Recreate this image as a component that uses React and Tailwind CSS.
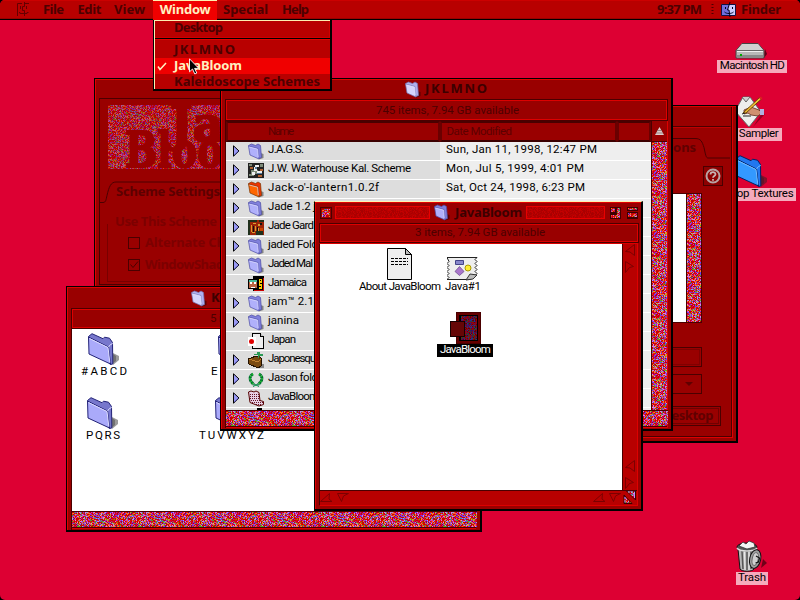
import React, { useLayoutEffect, useRef, useState } from "react";

const CHARCOAL = "font-['Noto_Sans','Open_Sans',sans-serif] font-bold text-[13px]";
const GENEVA = "font-['Roboto','Liberation_Sans',sans-serif] text-[11.5px]";

/* Text tracked out (or in) so that it fills a given width. */
function Fit({ w, className = "", children }) {
  const ref = useRef(null);
  const [space, setSpace] = useState(0);
  useLayoutEffect(() => {
    const natural = ref.current.getBoundingClientRect().width - space * children.length;
    setSpace((w - natural) / Math.max(1, children.length - 1));
  }, [w, children]);
  return (
    <span ref={ref} className={"inline-block shrink-0 whitespace-pre " + className} style={{ letterSpacing: space + "px" }}>
      {children}
    </span>
  );
}

/* Pixel confetti texture, one path per colour. */
function confetti(colors, size, start) {
  let seed = start;
  const paths = colors.map(() => "");
  for (let y = 0; y < size; y++)
    for (let x = 0; x < size; x++) {
      seed = (seed * 48271) % 2147483647;
      const i = Math.floor((seed / 2147483647) * colors.length);
      paths[i] += `M${x} ${y}h1v1h-1z`;
    }
  return paths.map((d, i) => <path key={i} d={d} fill={colors[i]} />);
}
const BRIGHT = ["#cc0000", "#dd0022", "#990033", "#cc0000", "#ee2200", "#cc0000", "#cc33cc", "#dd77ee", "#ff8822", "#5555ee", "#7733ee", "#55aa22", "#993399", "#dd0044", "#cc1100", "#99aacc", "#cc9933", "#ff5533"];
const DARK = ["#660000", "#771111", "#331166", "#223388", "#990000", "#225522", "#551155", "#880022"];

function Textures() {
  return (
    <svg className="absolute h-0 w-0" aria-hidden="true">
      <defs>
        <pattern id="bloom" width="61" height="61" patternUnits="userSpaceOnUse" shapeRendering="crispEdges">{confetti(BRIGHT, 61, 7717)}</pattern>
        <pattern id="dim" width="31" height="31" patternUnits="userSpaceOnUse" shapeRendering="crispEdges">{confetti(DARK, 31, 913)}</pattern>
        <pattern id="grain" width="31" height="31" patternUnits="userSpaceOnUse" shapeRendering="crispEdges">{confetti(["#b80000", "#b00000", "#a80000", "#c40000"], 31, 511)}</pattern>
      </defs>
    </svg>
  );
}
function Noise({ className, fill = "url(#bloom)" }) {
  return <svg className={"block shrink-0 " + className}><rect width="100%" height="100%" fill={fill} /></svg>;
}

function SmallFolder({ front = "#b0b0fb", back = "#8080dc", line = "#4a4aa4" }) {
  return (
    <svg className="block h-[17px] w-[17px] shrink-0" viewBox="0 0 17 17">
      <path d="M11 16.500l4.500-1.500v-4l-3-1z" fill="#000" opacity=".4" />
      <path d="M.5 2.500L3.500 1l4 1.500L10 1l2.500 1.500 1 12L11 15.500z" fill={back} stroke={line} strokeWidth=".7" />
      <path d="M.5 3l9.500 2.500 1 10.500-9-4z" fill={front} stroke={line} strokeWidth=".7" />
      <path d="M1.300 4l8.300 2.200.7 8" fill="none" stroke="#e0e0ff" strokeWidth=".7" />
    </svg>
  );
}
function BigFolder({ front = "#aaaafa", back = "#7777cc", line = "#222277", light = "#ddddff" }) {
  return (
    <svg className="block h-[33px] w-8" viewBox="0 0 32 33">
      <path d="M25 32l6-5v-4l-6-3z" fill="#222" opacity=".45" />
      <path d="M24 31l4-3v-5l-3-2z" fill="#222" opacity=".35" />
      <path d="M.5 3.500L4 .700l11 5 1.500-1.500 5 1L24.500 9.500l.3 21.500-2.500.5z" fill={back} stroke={line} />
      <path d="M.5 4L20.500 14l2 17L1 21z" fill={front} stroke={line} />
      <path d="M1.500 5.500l18.500 9 1.800 15" fill="none" stroke={light} />
      <path d="M20.500 14l2-2.500 2.300-1" fill="none" stroke={light} />
    </svg>
  );
}
function Triangle() {
  return (
    <svg className="block h-3 w-2 shrink-0" viewBox="0 0 8 12">
      <path d="M1.500.8v10.400L7 6z" fill="#9a9af5" stroke="#000" />
      <path d="M2.500 10l4-4" stroke="#5555bb" strokeWidth=".7" />
    </svg>
  );
}
function Pic({ children }) {
  return <svg className="block h-[17px] w-[17px] shrink-0" viewBox="0 0 17 17" shapeRendering="crispEdges">{children}</svg>;
}
const PICS = {
  folder: <SmallFolder />,
  orange: <SmallFolder front="#ff6600" back="#ee3300" line="#773300" />,
  water: (
    <Pic>
      <path d="M0 1h16v15H0z" fill="#222" />
      <path d="M1 2h3v2H1zM3 8h7v4H3zM12 2h3v3h-3zM1 12h5v2H1z" fill="#7c8a78" />
      <path d="M7 3h4v2H7zM6 5h3v4H6zM9 9h5v2H9zM4 10h3v3H4z" fill="#eee" />
      <path d="M12 7h3v2h-3zM2 5h3v2H2zM10 13h4v2h-4z" fill="#b06030" />
      <path d="M7 5h2v2H7zM9 11h5v1H9z" fill="#557799" />
    </Pic>
  ),
  garden: (
    <Pic>
      <path d="M0 1h16v15H0z" fill="#9c2408" />
      <path d="M0 1h9v2H0zM0 3h2v13H0zM8 12h7v4H8zM11 1h5v2h-5z" fill="#20301c" />
      <path d="M3 6h1v7H3zM5 4h3v1H5zM7 7h1v5H7zM10 5h2v2h-2zM4 13h3v1H4zM10 9h1v3h-1z" fill="#d8a030" />
      <path d="M5 7h1v6H5zM9 8h1v4H9zM12 4h2v2h-2z" fill="#111" />
      <path d="M12 9h3v3h-3z" fill="#cc4400" />
    </Pic>
  ),
  jamaica: (
    <Pic>
      <path d="M5 0h11v15H5zM0 3h10v10H0z" fill="#000" />
      <path d="M6 14h9V2h1v13H6z" fill="#cc0000" />
      <path d="M1 4h8v2H1z" fill="#44bb99" />
      <path d="M1 6h8v6H1z" fill="#bb6644" />
      <path d="M2 6h2v2H2zM6 6h2v2H6zM3 11h4v1H3z" fill="#fff" />
      <path d="M11 3h3v10h-3z" fill="#ffcc00" />
      <path d="M12 4h1v1h-1zM12 7h2v1h-2zM11 10h2v1h-2z" fill="#000" />
    </Pic>
  ),
  japan: (
    <Pic>
      <path d="M4.500.5h8l3 3v12h-11z" fill="#eee" stroke="#000" />
      <path d="M12.500.5v3h3" fill="#bbb" stroke="#000" />
      <path d="M0 4h8v9H0z" fill="#fff" />
      <circle cx="3.500" cy="8.500" r="2.500" fill="#e00000" shapeRendering="auto" />
    </Pic>
  ),
  japonesque: (
    <Pic>
      <path d="M13 12h3v4h-4z" fill="#888" />
      <path d="M.5 7L8 4l5 2v8l-3 2-9-4z" fill="#7a4a10" stroke="#221100" />
      <path d="M1 7l9 3 3-3" fill="none" stroke="#c08030" />
      <path d="M9 0h3v2h3v2h-4v2h-1V3H6V2h3z" fill="#2a9a55" />
      <path d="M11 4h1v3h-1z" fill="#663300" />
    </Pic>
  ),
  wreath: (
    <svg className="block h-[17px] w-[17px] shrink-0" viewBox="0 0 17 17">
      <path d="M5 3C1 5 1 10 6 13.500M11 3c4 2 4 7-1 10.500" fill="none" stroke="#063" strokeWidth="3" strokeDasharray="2.600 .5" />
      <path d="M5 3C1 5 1 10 6 13.500M11 3c4 2 4 7-1 10.500" fill="none" stroke="#11bb22" strokeWidth="1.600" strokeDasharray="1.600 1" />
      <path d="M5 15.500l5-2.500M11 15.500L6 13" stroke="#084" />
    </svg>
  ),
  bloom: (
    <svg className="block h-[17px] w-[17px] shrink-0" viewBox="0 0 17 17">
      <path d="M.5 2L3 1l3 1 2-1 3 1.500 1 8 3.500 1v3L11 16l-9-3.500z" fill="#e8d0e4" stroke="#550000" />
      <path d="M2 4.500h9M2 6.500h9M2 8.500h9M3 10.500h9M4 12.500h11M8 14.500h6" stroke="#550011" strokeWidth=".9" strokeDasharray="1 1" />
    </svg>
  ),
};

const ROWS = [
  ["folder", "J.A.G.S.", 36, "Sun, Jan 11, 1998, 12:47 PM", 151],
  ["water", "J.W. Waterhouse Kal. Scheme", 143, "Mon, Jul 5, 1999, 4:01 PM", 138],
  ["orange", "Jack-o'-lantern1.0.2f", 111, "Sat, Oct 24, 1998, 6:23 PM", 139],
  ["folder", "Jade 1.2 j", 48],
  ["garden", "Jade Gard", 46],
  ["folder", "jaded Fold", 50],
  ["folder", "Jaded Mal", 45],
  ["jamaica", "Jamaica", 39],
  ["folder", "jam™ 2.1", 46],
  ["folder", "janina", 31],
  ["japan", "Japan", 28],
  ["japonesque", "Japonesqu", 48],
  ["wreath", "Jason fold", 50],
  ["bloom", "JavaBloom", 51],
];

function InfoStrip({ children, className = "" }) {
  return (
    <div className={"flex shrink-0 items-center border border-[#4a0000] bg-[#990000] " + className}>
      <div className={"flex h-full w-full items-center border border-[#dd0000] text-[#4c0000] " + GENEVA}>{children}</div>
    </div>
  );
}

function Frame({ className, top = "border-t-[#e00000]", children }) {
  return (
    <section className={"absolute border-l border-r-2 border-b-2 border-t border-black " + className}>
      <div className={"flex h-full flex-col border-t border-l border-l-[#e00000] bg-[#990000] " + top}>{children}</div>
    </section>
  );
}

function SchemePanel() {
  return (
    <>
      <section className="absolute left-[300px] top-[105px] h-[338px] w-[438px] border border-r-2 border-b-2 border-black bg-[#990000]">
        <div className="flex h-full border-t border-t-[#dd0000] pb-[3px] pr-[3px]">
          <div className="flex flex-1 flex-col items-end border-b border-r border-[#dd0000]">
            <div className="flex w-full flex-1 flex-col items-end border-b border-r border-[#4a0000]">
              <svg className="block h-[52px] w-[358px]" viewBox="374 107 358 52" fill="none">
                <path d="M374 126.500h357.500" stroke="#4a0000" />
                <path d="M374 127.500h357.500" stroke="#c00000" />
                <path d="M374 138.500h322c6 0 7 3 9 9 1.500 7 2 10.500 4 10.500h22" stroke="#4a0000" />
              </svg>
              <span className={"-mt-[21px] mr-[35px] h-[21px] leading-[18px] text-[#600000] " + CHARCOAL}><Fit w={23}>ons</Fit></span>
              <div className="mr-2 mt-[7px] flex h-5 w-5 items-center justify-center border border-[#4a0000] bg-[#8c0000]">
                <svg className="h-4 w-4" viewBox="0 0 16 16" fill="none">
                  <circle cx="8" cy="8" r="6.500" stroke="#b8a4a4" strokeWidth="2" />
                  <path d="M5.500 6.500C5.500 3.500 10.500 3.500 10.500 6.200 10.500 8 8 8 8 9.700M8 11v1.800" stroke="#c8b4b4" strokeWidth="1.800" />
                </svg>
              </div>
              <div className="mr-[29px] mt-[7px] flex h-[130px] border border-[#4a0000]">
                <div className="w-[100px] bg-white" />
                <Noise className="h-full w-[15px] border-l border-[#4a0000]" />
              </div>
              <div className="mr-[29px] mt-6 h-5 w-[100px] border border-[#4a0000] p-px"><div className="h-full border border-[#800000]" /></div>
              <div className="mr-[29px] mt-[7px] flex h-5 w-[100px] items-center justify-end border border-[#4a0000] pr-[7px]">
                <svg className="h-1 w-[9px]"><path d="M0 0h8L4 4z" fill="#600000" /></svg>
              </div>
              <div className="mr-[10px] mt-3 flex h-5 w-[100px] border border-[#4a0000] p-px">
                <div className={"flex h-full w-full items-center justify-end border border-[#700000] pr-[5px] text-[#600000] " + CHARCOAL}><Fit w={51}>Desktop</Fit></div>
              </div>
            </div>
          </div>
        </div>
      </section>

      <Frame className="left-[94px] top-[78px] h-[360px] w-[400px]">
        <div className="ml-[3px] mt-[18px] flex h-[187px] flex-col border border-[#4a0000]">
          <div className="ml-[8px] mt-[6px] h-[64px] w-[200px] overflow-hidden">
            <div className="relative h-full">
              <Noise className="h-full w-full" />
              <div className="absolute inset-0 bg-[#990000]/40" />
              <div className="absolute left-[62px] top-[-11px] font-['DejaVu_Serif',serif] text-[48px] font-bold leading-[60px] text-[#990000] [-webkit-text-stroke:2px_#990000]">Java</div>
              <div className="absolute left-[17px] top-[15px] origin-left scale-x-[0.78] font-['DejaVu_Serif',serif] text-[49px] font-bold leading-[60px] text-[#990000] [-webkit-text-stroke:2px_#990000]">Bloom</div>
            </div>
          </div>
          <svg className="block h-[35px] w-[250px] shrink-0" viewBox="100 169 250 35" fill="none">
            <path d="M100 202.500h3c3 0 3-3 4-7 2-9 4-13.500 9-13.500h234" stroke="#4a0000" />
          </svg>
          <div className={"-mt-[22px] ml-[16px] h-[18px] leading-[18px] text-[#5c0000] " + CHARCOAL}><Fit w={104}>Scheme Settings</Fit></div>
          <div className={"ml-[15px] mt-[12px] h-[18px] leading-[18px] text-[#7c0000] " + CHARCOAL}><Fit w={102}>Use This Scheme</Fit></div>
          <div className={"-mt-[6px] ml-[7px] flex h-[58px] flex-col border-l border-b border-[#780000] pl-5 pt-[8px] text-[#7c0000] " + CHARCOAL}>
            <div className="flex h-[22px] items-center gap-[5px]">
              <svg className="h-3 w-3"><rect x=".5" y=".5" width="11" height="11" fill="none" stroke="#4a0000" /></svg>
              <Fit w={80}>Alternate Ch</Fit>
            </div>
            <div className="flex h-[22px] items-center gap-[5px]">
              <svg className="h-3 w-3" fill="none" stroke="#4a0000"><rect x=".5" y=".5" width="11" height="11" /><path d="M2.500 5.500l2.500 3 5-6" /></svg>
              <Fit w={79}>WindowShad</Fit>
            </div>
          </div>
        </div>
      </Frame>
    </>
  );
}

function CanvasIcon({ className, w, label, children }) {
  return (
    <div className={"absolute flex flex-col items-center " + className}>
      {children}
      <span className={"leading-[11px] text-black " + GENEVA}><Fit w={w}>{label}</Fit></span>
    </div>
  );
}

function SchemesWindow() {
  return (
    <Frame className="left-[66px] top-[286px] h-[246px] w-[416px]">
      <div className={"flex h-5 shrink-0 items-center pl-[123px] text-[#3c0000] " + CHARCOAL}>
        <SmallFolder front="#d4d4fc" back="#b0b0ee" line="#7070b0" />
        <span className="ml-[3px]"><Fit w={140}>Kaleidoscope Schemes</Fit></span>
      </div>
      <InfoStrip className="mx-[3px] h-[21px] pl-0"><span className="ml-[137px]"><Fit w={125}>5 items, 7.94 GB available</Fit></span></InfoStrip>
      <div className="ml-[3px] mr-1 flex flex-1 flex-col border-l border-[#4a0000]">
        <div className="relative h-[182px] w-[405px] overflow-hidden bg-white">
          <CanvasIcon className="left-[9px] top-[4px]" w={46} label="# A B C D"><BigFolder /></CanvasIcon>
          <CanvasIcon className="left-[139px] top-[4px]" w={44} label="E F G H"><BigFolder /></CanvasIcon>
          <CanvasIcon className="left-[14px] top-[68px]" w={34} label="P Q R S"><BigFolder /></CanvasIcon>
          <CanvasIcon className="left-[127px] top-[68px]" w={65} label="T U V W X Y Z"><BigFolder /></CanvasIcon>
        </div>
        <Noise className="h-4 w-[405px] border-t border-[#4a0000]" />
        <div className="h-[3px] border-t border-[#4a0000]"><div className="border-t border-[#dd0000]" /></div>
      </div>
    </Frame>
  );
}

function ColumnHead({ className, children }) {
  return (
    <div className={"border-2 border-[#6a0000] border-t-[#4a0000] border-b-[#3c0000] bg-[#990000] " + className}>
      <div className={"flex h-full items-center text-[#5c0000] " + GENEVA}>{children}</div>
    </div>
  );
}

function ListWindow() {
  return (
    <Frame className="left-[220px] top-[78px] h-[353px] w-[453px]">
      <div className={"flex h-[19px] shrink-0 items-center pl-[183px] text-[#3c0000] " + CHARCOAL}>
        <SmallFolder front="#d4d4fc" back="#b0b0ee" line="#7070b0" />
        <span className="ml-[3px] pb-px"><Fit w={62}>J K L M N O</Fit></span>
      </div>
      <InfoStrip className="mx-[3px] h-[22px]"><span className="ml-[149px] pt-px"><Fit w={143}>745 items, 7.94 GB available</Fit></span></InfoStrip>
      <div className="ml-[3px] mr-[3px] flex flex-1 flex-col border-l border-r border-l-[#4a0000] border-r-[#dd0000]">
        <div className="flex h-[21px] shrink-0">
          <ColumnHead className="w-[214px] pl-10"><Fit w={26}>Name</Fit></ColumnHead>
          <ColumnHead className="w-[178px] pl-[5px]"><Fit w={65}>Date Modified</Fit></ColumnHead>
          <ColumnHead className="w-[34px]" />
          <div className="flex w-4 items-center justify-center border-l border-b border-[#4a0000] pb-px">
            <svg className="h-2 w-[9px]" viewBox="0 0 9 8"><path d="M4.500 0L9 8H0z" fill="#ddcccc" /><path d="M2 3.500h5M1 6h7" stroke="#887070" strokeWidth=".8" /></svg>
          </div>
        </div>
        <div className="flex h-[268px] shrink-0">
          <div className="h-[268px] w-[426px] overflow-hidden bg-white">
            {ROWS.map(([icon, name, w, date, dw]) => (
              <div key={name} className={"flex h-[19px] " + GENEVA}>
                <div className="mb-px flex h-[18px] w-[214px] items-center bg-[#dddddd] pl-[6px]">
                  <span className="w-[16px]">{["jamaica", "japan"].includes(icon) ? null : <Triangle />}</span>
                  {PICS[icon]}
                  <Fit w={w} className="ml-[3px] pb-[2px]">{name}</Fit>
                </div>
                <div className="mb-px flex h-[18px] flex-1 items-center bg-[#eeeeee] pl-[6px] pb-[2px]">{date ? <Fit w={dw}>{date}</Fit> : null}</div>
              </div>
            ))}
            <div className="flex h-[2px]"><div className="w-[214px] bg-[#dddddd] pl-[31px]"><div className="h-full w-[5px] bg-black" /></div><div className="flex-1 bg-[#eeeeee]" /></div>
          </div>
          <Noise className="h-[268px] w-[16px] border-l border-[#4a0000]" />
        </div>
        <Noise className="h-4 w-[442px] border-t border-[#4a0000]" />
        <div className="h-[2px] border-t border-b border-t-[#4a0000] border-b-[#dd0000]" />
      </div>
      <div className="h-[2px]" />
    </Frame>
  );
}

function Arrow({ d }) {
  return <svg className="block h-3 w-3 shrink-0" viewBox="0 0 12 12" fill="none"><path d={d} stroke="#7c0000" /></svg>;
}
const ARROW_BACK = "M10.500.5L1.500 7.500 6 8l4.500 3.500z";
const ARROW_FWD = "M1.500.5l8 5-4 1-4 5z";
const ARROW_LEFT = "M.5 10.500L9.500 2.500 9 8l3 2.500z";
const ARROW_RIGHT = "M.5 2.500h11l-5 2.500-2 5.500z";

function TitleBar() {
  return (
    <div className="flex h-5 shrink-0 items-center pl-1 pr-[3px] pb-px">
      <div className="h-3 w-3 border border-[#4a0000] p-px"><Noise className="h-full w-full" /></div>
      <div className="ml-[3px] h-[13px] w-[96px] border border-[#e80000]"><Noise className="h-full w-full" fill="url(#grain)" /></div>
      <div className="ml-[4px]"><SmallFolder /></div>
      <span className={"ml-[4px] text-[#3c0000] " + CHARCOAL}><Fit w={67}>JavaBloom</Fit></span>
      <div className="ml-1 h-[13px] w-[80px] border border-[#e80000]"><Noise className="h-full w-full" fill="url(#grain)" /></div>
      <svg className="ml-[5px] h-3 w-[11px]" viewBox="0 0 11 12">
        <path d="M0 0h11v12H0z" fill="#3c0000" /><path d="M1 1h4v4H1zM7 1h3v10H1V8h6z" fill="url(#bloom)" />
      </svg>
      <svg className="ml-[6px] h-3 w-[11px]" viewBox="0 0 11 12">
        <path d="M0 0h11v4H0zM0 5h11v7H0z" fill="#3c0000" /><path d="M1 1h9v2H1zM1 6h9v4H1z" fill="url(#bloom)" />
      </svg>
    </div>
  );
}

function BloomWindow() {
  return (
    <Frame className="left-[314px] top-[201px] h-[310px] w-[329px] border-t-[#fff0b0]">
      <TitleBar />
      <InfoStrip className="ml-[3px] mr-[2px] h-[20px]"><span className="ml-[94px]"><Fit w={130}>3 items, 7.94 GB available</Fit></span></InfoStrip>
      <div className="mx-[3px] flex flex-1 flex-col border border-t-[#dd0000] border-b-[#dd0000] border-l-[#4a0000] border-r-[#dd0000] bg-[#b80000]">
        <div className="flex h-[246px]">
          <div className="relative w-[302px] bg-white">
            <CanvasIcon className="left-[39px] top-[4px]" w={82} label="About JavaBloom">
              <svg className="mb-px block h-8 w-[25px]" viewBox="0 0 25 32" fill="none" stroke="#000">
                <path d="M.5.5h18l6 6v25H.5z" fill="#eeeeee" /><path d="M18.500.5v6h6z" fill="#bbbbbb" />
                <path d="M4 10.500h17M4 13.500h17M4 16.500h17" strokeDasharray="3 1" />
              </svg>
            </CanvasIcon>
            <CanvasIcon className="left-[125px] top-[13px]" w={36} label="Java#1">
              <svg className="block h-6 w-[31px]" viewBox="0 0 31 24">
                <path d="M0 .5h30l-2 2 2 2-2 2 2 2-2 2 2 2-2 2 2 2-6 6H0l2-2-2-2 2-2-2-2 2-2-2-2 2-2-2-2 2-2z" fill="#eeeeee" stroke="#222" />
                <path d="M19 23l4-6 7 1-4 4z" fill="#bbb" stroke="#333" />
                <path d="M8.500 3.500h8v4h-8z" fill="#8888cc" stroke="#444488" />
                <path d="M12.500 9.500l4.500 5-4.500 4-4.500-4z" fill="#aa77cc" stroke="#664488" strokeWidth=".7" />
                <circle cx="21" cy="11" r="3" fill="#ffee33" stroke="#aa9900" />
              </svg>
            </CanvasIcon>
            <div className="absolute left-[117px] top-[68px] flex w-[56px] flex-col items-center">
              <svg className="block h-8 w-[31px]" viewBox="0 0 31 32">
                <path d="M6 0h25v32H6z" fill="#4a0000" /><path d="M7 1h23v30H7z" fill="#660000" />
                <path d="M9 3h19v26H9z" fill="#000" /><path d="M11 4h16v24H11z" fill="url(#dim)" />
                <path d="M0 9h15v16H0z" fill="#180000" /><path d="M1 10h13v14H1z" fill="#660606" />
              </svg>
              <div className={"flex h-[13px] w-[56px] items-center justify-center bg-black pb-px text-white " + GENEVA}><Fit w={51}>JavaBloom</Fit></div>
            </div>
          </div>
          <div className="flex w-[15px] flex-col border-l border-[#4a0000] pl-px pb-px">
            <Arrow d={ARROW_BACK} />
            <div className="mt-[5px]"><Arrow d={ARROW_FWD} /></div>
            <div className="mt-auto"><Arrow d={ARROW_BACK} /></div>
            <div className="mt-[5px]"><Arrow d={ARROW_FWD} /></div>
          </div>
        </div>
        <div className="flex flex-1 border-t border-[#4a0000]">
          <Arrow d={ARROW_LEFT} />
          <div className="ml-[5px]"><Arrow d={ARROW_RIGHT} /></div>
          <div className="ml-auto"><Arrow d={ARROW_LEFT} /></div>
          <div className="ml-[4px]"><Arrow d={ARROW_RIGHT} /></div>
          <svg className="ml-[2px] block h-[13px] w-[14px]" viewBox="0 0 14 13">
            <path d="M3.500 0h9v9zM1 12.500V4l8 8.500z" fill="url(#bloom)" stroke="#3c0000" />
            <path d="M5 1h6M11.500 1v6M2 6v6" stroke="#aaaaee" strokeDasharray="2 1" />
          </svg>
        </div>
      </div>
      <div className="h-[3px]" />
    </Frame>
  );
}

function DesktopLabel({ w, children, className = "" }) {
  return <div className={"flex h-[13px] items-center justify-center bg-[#f5aabc] pb-px text-black " + GENEVA + " " + className}><Fit w={w}>{children}</Fit></div>;
}

function DesktopIcons() {
  return (
    <>
      <div className="absolute left-[717px] top-[43px] flex w-[70px] flex-col items-center gap-px">
        <svg className="-ml-[2px] block h-4 w-8" viewBox="0 0 32 16">
          <path d="M29 15l3-4-2-5z" fill="#600018" />
          <path d="M7 .5h16l6 7v7.500H1V7.500z" fill="#b8b8b8" stroke="#444" />
          <path d="M7 1h16l5 6H2z" fill="#d0d0d0" /><path d="M1 7.500h28" stroke="#666" /><path d="M2 8.500h26" stroke="#eee" />
          <path d="M2 12h26v3H2z" fill="#8a8a8a" /><path d="M5 11h2v2H5z" fill="#00aa00" />
        </svg>
        <DesktopLabel w={65} className="w-[70px]">Macintosh HD</DesktopLabel>
      </div>
      <div className="absolute left-[735px] top-[96px] flex w-[47px] flex-col">
        <svg className="block h-8 w-8" viewBox="0 0 32 32">
          <path d="M18 31l12-13-3-1z" fill="#600018" opacity=".6" />
          <path d="M8 1h7l11 15-12 15L0 15z" fill="#eeeeee" stroke="#666" />
          <path d="M7 1l4 5 4-5" fill="#ccc" stroke="#666" />
          <path d="M9 14l7-3 8 3 3 3-4 3-7-1-3-2-4 1z" fill="#d09070" stroke="#602818" strokeWidth=".8" />
          <path d="M25 13h4v6h-4z" fill="#b0b0e0" />
          <path d="M8 17L25 1l2 1.500L11 17z" fill="#eebb33" stroke="#553300" strokeWidth=".8" /><path d="M24 2l1.500-1.500 2 1.500L26 4z" fill="#dd2222" />
          <path d="M7 18l3-1M8 20h8" stroke="#222" />
        </svg>
        <DesktopLabel w={40} className="w-[47px]">Sampler</DesktopLabel>
      </div>
      <div className="absolute left-[734px] top-[155px] flex w-[62px] flex-col">
        <div className="ml-[2px]"><BigFolder front="#3399ff" back="#2277ee" line="#002266" light="#77bbff" /></div>
        <DesktopLabel w={57} className="w-[62px]">op Textures</DesktopLabel>
      </div>
      <div className="absolute left-[735px] top-[540px] flex w-[34px] flex-col items-center">
        <svg className="block h-8 w-[34px]" viewBox="0 0 34 32">
          <path d="M26 28l6-5-4-4z" fill="#700018" />
          <path d="M3 9h18l-2 20c-2 3-12 3-14 0z" fill="#b8b8b8" stroke="#111" />
          <path d="M7 11l1 18M12 11v19M16 11v18" stroke="#555" strokeWidth="1.500" /><path d="M9.500 11l.5 19M14 11v19" stroke="#eee" />
          <ellipse cx="12" cy="7" rx="10" ry="4" fill="#555" stroke="#111" />
          <path d="M4 6l4-4 3 2 3-3 5 2 1 4-8 2z" fill="#f4f4f4" stroke="#333" strokeWidth=".8" />
          <path d="M2 8c3 4 17 4 20 0" fill="none" stroke="#ddd" strokeWidth="1.500" />
          <ellipse cx="20" cy="19" rx="5.500" ry="9.500" fill="#a0a0a0" stroke="#111" transform="rotate(12 20 20)" />
          <ellipse cx="20" cy="19" rx="3" ry="6.500" fill="#d0d0d0" stroke="#666" transform="rotate(12 20 20)" />
          <path d="M21 16l3.500 2-1 4-3 1" fill="none" stroke="#111" strokeWidth="1.200" />
        </svg>
        <DesktopLabel w={28} className="w-8">Trash</DesktopLabel>
      </div>
    </>
  );
}

function MenuBar() {
  return (
    <header className={"absolute inset-x-0 top-0 flex h-5 items-center border-b border-b-black bg-[#b80000] text-[#4c0000] shadow-[inset_0_1px_0_#cc0000,inset_0_-1px_0_#990000] " + CHARCOAL}>
      <svg className="ml-4 h-[15px] w-[13px] shrink-0" viewBox="0 0 13 15" fill="none" stroke="#640000">
        <path d="M1.500 14V1.500H6M9 1.500h4M4.500 4v3M10.500 4v3M8.500 0v4.500H6.500V8.500h2V14M3 10.500h1v1h7v-1h1.500" />
      </svg>
      <Fit w={21} className="ml-[14px]">File</Fit>
      <Fit w={24} className="ml-[14px]">Edit</Fit>
      <Fit w={31} className="ml-[13px]">View</Fit>
      <div className="ml-[8px] flex h-5 w-16 shrink-0 items-center justify-center border-t border-[#fff0b0] bg-[#f00000] text-[#fff0c0]"><Fit w={51}>Window</Fit></div>
      <Fit w={45} className="ml-[6px]">Special</Fit>
      <Fit w={27} className="ml-[14px]">Help</Fit>
      <span className="absolute left-[657px]"><Fit w={45}>9:37 PM</Fit></span>
      <svg className="absolute left-[711px] top-1 h-3 w-[3px]"><path d="M1.500 0v12" stroke="#4c0000" strokeDasharray="1 2" strokeWidth="2" /></svg>
      <svg className="absolute left-[721px] top-[2px] h-[15px] w-[16px]" viewBox="0 0 16 15" fill="none">
        <path d="M.5 2.500h14v11H.5z" fill="#ccccff" stroke="#111144" /><path d="M1 3h7l-1.500 5H8v5H1z" fill="#7070dd" />
        <path d="M4.500 5v2M11.500 5v2M9 0L6.500 8H8l1 7M3.500 10c2 2 7 2 9 0" stroke="#000022" />
      </svg>
      <span className="absolute left-[741px]"><Fit w={40}>Finder</Fit></span>
    </header>
  );
}

function WindowMenu() {
  const item = "flex items-center pl-[19px] ";
  return (
    <nav className={"absolute left-[153px] top-5 h-[71px] w-[179px] border-b-2 border-l border-r-2 border-black bg-[#b80000] text-[#4c0000] " + CHARCOAL}>
      <div className="flex h-full flex-col border-l border-t border-[#fff0b0]">
        <div className={item + "h-[17px] pb-[4px] shadow-[inset_-1px_-1px_0_#d00000]"}><Fit w={49}>Desktop</Fit></div>
        <div className="h-[2px] border-b border-t border-b-[#e00000] border-t-black" />
        <div className={item + "h-[18px] pt-[2px]"}><Fit w={61}>J K L M N O</Fit></div>
        <div className="flex h-4 items-center bg-[#f00000] pl-[2px] text-[#fff0c0]">
          <svg className="mr-[7px] h-[9px] w-[10px]" viewBox="0 0 10 9" fill="none"><path d="M1 4.500l2 3L9 1" stroke="#fff0c0" strokeWidth="1.500" /></svg>
          <Fit w={68}>JavaBloom</Fit>
        </div>
        <div className={item + "h-[15px]"}><Fit w={146}>Kaleidoscope Schemes</Fit></div>
      </div>
    </nav>
  );
}

export default function App() {
  return (
    <div className="relative h-[600px] w-[800px] overflow-hidden bg-black">
      <Textures />
      <main className="relative h-full w-full overflow-hidden rounded-[5px] bg-[#dd0033]">
        <DesktopIcons />
        <SchemePanel />
        <SchemesWindow />
        <ListWindow />
        <BloomWindow />
        <MenuBar />
        <WindowMenu />
        <svg className="absolute left-[189px] top-[58px] h-[17px] w-[11px]" viewBox="0 0 11 17">
          <path d="M.5.800v13L3.500 11l2.300 5 2-1-2.200-4.600h4.200z" fill="#000" stroke="#fff" strokeWidth=".9" />
        </svg>
      </main>
    </div>
  );
}
